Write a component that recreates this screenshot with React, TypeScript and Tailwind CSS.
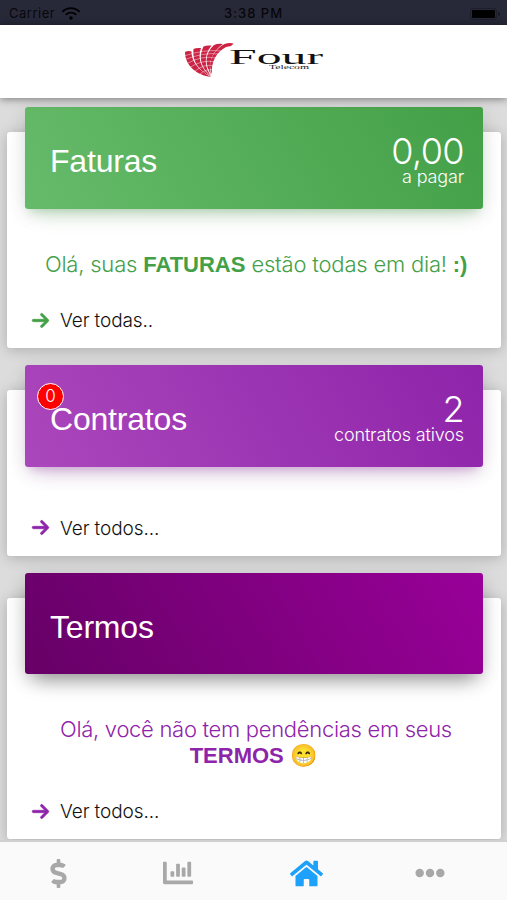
import type { ReactNode } from "react";
import { FaArrowRight, FaWifi } from "react-icons/fa6";
import { FaChartBar, FaDollarSign, FaEllipsisH, FaHome } from "react-icons/fa";

interface CardProps {
  titulo: string
  gradiente: string
  className: string
  corSeta: string
  link: string
  valor?: string
  legenda?: string
  badge?: string
  children?: ReactNode
}

function StatusBar() {
  return (
    <div className="h-[25px] shrink-0 bg-[#272838] flex items-center justify-between pl-[9px] pr-[7px] pt-[2px] text-[13px] text-black/80">
      <div className="flex items-center gap-[7px] w-[120px]">
        <span className="font-[Inter] tracking-[0.5px]">Carrier</span>
        <FaWifi className="w-[18px] h-[15px] text-black" />
      </div>
      <span className="font-[Inter] font-medium text-[13px] tracking-[1px] -ml-[2px] text-black/85">3:38 PM</span>
      <div className="flex justify-end items-center w-[120px]">
        <div className="w-[27px] h-[12px] rounded-[3px] border border-black/25 p-px">
          <div className="h-full rounded-[1px] bg-black" />
        </div>
        <div className="w-[2px] h-[4px] rounded-r bg-black/40 ml-px" />
      </div>
    </div>
  )
}

function Logo() {
  return (
    <svg width="142" height="38" viewBox="0 0 142 38" className="ml-[3px]">
      <g fill="#cc2344">
        <path d="M1 9Q4 7.500 7.500 8.500C7.500 20 16 28 27 34C13 32 1 23 1 9Z" />
        <path d="M9.500 6Q12 4.500 17 5C13 16 18 27 27 33.500C14 27 8 18 9.500 6Z" />
        <path d="M19.500 3.500Q22 2 27.500 2.500C19 13 21 25 27 33C17 25 14 14 19.500 3.500Z" />
        <path d="M30 2Q34 0 39 1C26 10 24 23 27.500 32C21 23 20 11 30 2Z" />
        <path d="M40.500 1Q45 -.5 49.500 .5Q48 3.500 42 4C31 10 27 21 28 31C23 21 28 8 40.500 1Z" />
      </g>
      <g fill="none" stroke="#fff" strokeWidth="0.45">
        <path d="M0 13Q20 6 38 8" />
        <path d="M0 17Q19 9 35 11" />
        <path d="M2 21Q18 12 32 15" />
        <path d="M5 25Q18 16 31 19" />
        <path d="M10 29Q20 20 30 23" />
        <path d="M15 32Q22 25 30 27" />
      </g>
      <text x="45" y="20.500" textLength="94" lengthAdjust="spacingAndGlyphs" fontFamily="Liberation Serif, serif" fontSize="21.500" fill="#111">Four</text>
      <text x="85" y="25.500" textLength="40" lengthAdjust="spacingAndGlyphs" fontFamily="Liberation Serif, serif" fontSize="6.500" fill="#222">Telecom</text>
    </svg>
  )
}

function Card({ titulo, gradiente, className, corSeta, link, valor, legenda, badge, children }: CardProps) {
  return (
    <div className={`mx-[7px] mr-[6px] shrink-0 flex flex-col rounded-[3px] bg-white shadow-[0_2px_14px_rgba(0,0,0,0.22)] ${className}`}>
      <div className={`relative -mt-[25px] mx-[18px] h-[101.5px] shrink-0 rounded-[3px] px-[25px] pr-[19px] flex items-center justify-between text-white ${gradiente}`}>
        <h2 className="text-[32px] leading-none -tracking-[0.2px] pt-[7px]">{titulo}</h2>
        {valor && (
          <div className="text-right font-[Inter] font-light pt-[5px]">
            <p className="text-[36px] leading-[34px] -tracking-[0.6px]">{valor}</p>
            <p className="text-[18px] leading-[18px] -tracking-[0.15px]">{legenda}</p>
          </div>
        )}
        {badge && (
          <span className="absolute left-[12px] top-[18px] size-[27px] rounded-full border border-white bg-[#ff0000] flex items-center justify-center text-[17px] font-[Inter] font-light">
            {badge}
          </span>
        )}
      </div>
      {children}
      <a className="mt-auto flex items-center gap-[10px] pl-[24px] pb-[15px]">
        <FaArrowRight className={`size-[19px] -mt-[2px] stroke-current stroke-[18px] ${corSeta}`} />
        <span className="font-[Inter] font-light text-[19px] leading-[24px] -tracking-[0.1px] text-[#111]">{link}</span>
      </a>
    </div>
  )
}

function App() {
  return (
    <div className="h-[900px] w-[507px] overflow-hidden flex flex-col bg-[#dcdcdc] font-['Liberation_Sans',Arial,sans-serif]">
      <StatusBar />
      <header className="relative z-10 h-[73px] shrink-0 bg-white flex justify-center pt-[18px] shadow-[0_1px_8px_rgba(0,0,0,0.45)]">
        <Logo />
      </header>

      <main className="flex-1 min-h-0 overflow-hidden flex flex-col">
        <Card
          titulo="Faturas"
          className="mt-[34px] h-[216px]"
          gradiente="bg-[linear-gradient(60deg,#66bb6a,#43a047)] shadow-[0_12px_20px_-10px_rgba(76,175,80,0.28),0_4px_20px_0_rgba(0,0,0,0.12),0_7px_8px_-5px_rgba(76,175,80,0.2)]"
          corSeta="text-[#43a047]"
          link="Ver todas.."
          valor="0,00"
          legenda="a pagar"
        >
          <p className="mt-[42.500px] pl-[4px] text-center whitespace-nowrap font-[Inter] font-light text-[22px] leading-[26px] -tracking-[0.2px] text-[#43a047]">
            Olá, suas <b className="font-bold font-['Liberation_Sans'] text-[22px] tracking-normal">FATURAS</b> estão todas em dia! <b className="font-bold font-['Liberation_Sans']">:)</b>
          </p>
        </Card>

        <Card
          titulo="Contratos"
          className="mt-[42px] h-[165.5px]"
          gradiente="bg-[linear-gradient(60deg,#ab47bc,#8e24aa)] shadow-[0_12px_20px_-10px_rgba(156,39,176,0.28),0_4px_20px_0_rgba(0,0,0,0.12),0_7px_8px_-5px_rgba(156,39,176,0.2)]"
          corSeta="text-[#8e24aa]"
          link="Ver todos..."
          valor="2"
          legenda="contratos ativos"
          badge="0"
        />

        <Card
          titulo="Termos"
          className="mt-[42px] h-[241.5px]"
          gradiente="bg-[linear-gradient(60deg,#660066,#990099)] shadow-[0_12px_20px_-8px_rgba(0,0,0,0.4),0_4px_20px_0_rgba(0,0,0,0.14)]"
          corSeta="text-[#8e24aa]"
          link="Ver todos..."
        >
          <p className="mt-[42px] pl-[4px] text-center whitespace-nowrap font-[Inter] font-light text-[22px] leading-[26px] -tracking-[0.3px] text-[#8e24aa]">
            Olá, você não tem pendências em seus<br />
            <span className="-ml-[6px]">
              <b className="font-bold font-['Liberation_Sans'] text-[22px] tracking-normal">TERMOS</b> 😁
            </span>
          </p>
        </Card>
      </main>

      <nav className="relative z-10 h-[60px] shrink-0 border-t-2 border-[#d0d0d0] bg-[#fafafa] flex items-center pt-[4px] text-[#a8a8a8]">
        <div className="w-[116px] flex justify-center"><FaDollarSign className="size-[29px]" /></div>
        <div className="w-[124px] flex justify-center"><FaChartBar className="size-[30px]" /></div>
        <div className="w-[132px] flex justify-center"><FaHome className="size-[33px] text-[#1ea1fb]" /></div>
        <div className="w-[116px] flex justify-center"><FaEllipsisH className="size-[30px]" /></div>
      </nav>
    </div>
  )
}

export default App
